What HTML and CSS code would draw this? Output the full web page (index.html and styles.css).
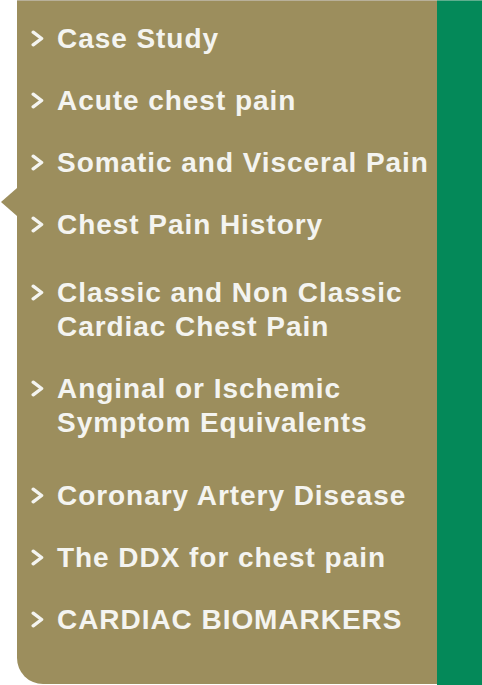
FILE: index.html
```html
<!DOCTYPE html>
<html lang="en">
<head>
<meta charset="utf-8">
<title>Chest pain topics</title>
<link rel="stylesheet" href="styles.css">
</head>
<body>
<div class="frame">
  <nav class="panel">
    <ul class="menu">
      <li class="item"><svg class="chev" viewBox="0 0 13 17"><polyline points="2.2,2.2 10.6,8.5 2.2,14.8"/></svg><span class="label">Case Study</span></li>
      <li class="item"><svg class="chev" viewBox="0 0 13 17"><polyline points="2.2,2.2 10.6,8.5 2.2,14.8"/></svg><span class="label">Acute chest pain</span></li>
      <li class="item"><svg class="chev" viewBox="0 0 13 17"><polyline points="2.2,2.2 10.6,8.5 2.2,14.8"/></svg><span class="label">Somatic and Visceral Pain</span></li>
      <li class="item"><svg class="chev" viewBox="0 0 13 17"><polyline points="2.2,2.2 10.6,8.5 2.2,14.8"/></svg><span class="label">Chest Pain History</span></li>
      <li class="item item-sm-gap"><svg class="chev" viewBox="0 0 13 17"><polyline points="2.2,2.2 10.6,8.5 2.2,14.8"/></svg><span class="label">Classic and Non Classic<br>Cardiac Chest Pain</span></li>
      <li class="item"><svg class="chev" viewBox="0 0 13 17"><polyline points="2.2,2.2 10.6,8.5 2.2,14.8"/></svg><span class="label">Anginal or Ischemic<br>Symptom Equivalents</span></li>
      <li class="item item-lg-gap"><svg class="chev" viewBox="0 0 13 17"><polyline points="2.2,2.2 10.6,8.5 2.2,14.8"/></svg><span class="label">Coronary Artery Disease</span></li>
      <li class="item"><svg class="chev" viewBox="0 0 13 17"><polyline points="2.2,2.2 10.6,8.5 2.2,14.8"/></svg><span class="label">The DDX for chest pain</span></li>
      <li class="item"><svg class="chev" viewBox="0 0 13 17"><polyline points="2.2,2.2 10.6,8.5 2.2,14.8"/></svg><span class="label">CARDIAC BIOMARKERS</span></li>
    </ul>
  </nav>
  <div class="bar"></div>
</div>
</body>
</html>
```

FILE: styles.css
```css
html, body {
  margin: 0;
  padding: 0;
  background: #ffffff;
}

.frame {
  display: flex;
  width: 482px;
  height: 685px;
}

.panel {
  position: relative;
  flex: 1;
  margin-left: 17px;
  background: #9c8e5d;
  border-top: 1px solid #b8b09a;
  border-bottom-left-radius: 26px;
  margin-bottom: 1px;
}

.panel::before {
  content: "";
  position: absolute;
  left: -16px;
  top: 187px;
  border-right: 16px solid #9c8e5d;
  border-top: 14px solid transparent;
  border-bottom: 14px solid transparent;
}

.bar {
  width: 45px;
  background: #048959;
  border-top: 1px solid #5fae8e;
}

.menu {
  list-style: none;
  margin: 0;
  padding: 21px 0 0 14px;
  display: flex;
  flex-direction: column;
  gap: 28px;
}

.item {
  display: flex;
  align-items: flex-start;
  gap: 13px;
  font-family: "Liberation Sans", Arial, sans-serif;
  font-weight: bold;
  font-size: 28px;
  line-height: 34px;
  letter-spacing: 0.95px;
  color: #f4f4f0;
}

.item-sm-gap {
  margin-top: 6px;
}

.item-lg-gap {
  margin-top: 11px;
}

.chev {
  flex: none;
  width: 13px;
  height: 17px;
  margin-top: 8px;
  fill: none;
  stroke: #f4f4f0;
  stroke-width: 3.4;
  stroke-linecap: round;
  stroke-linejoin: round;
}

.label {
  display: block;
}
```
